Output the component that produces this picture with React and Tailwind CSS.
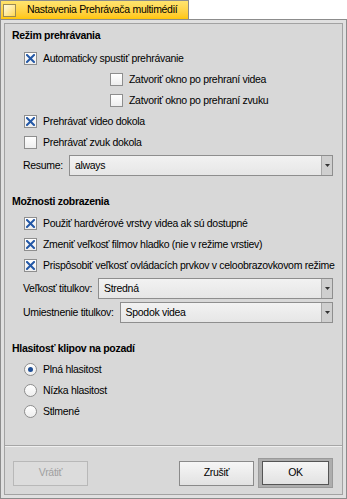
import React from 'react';

const Check = ({ checked }) => (
  <span className="flex h-[13px] w-[13px] shrink-0 items-center justify-center border border-[#8e8e8e] bg-linear-to-b from-[#ffffff] to-[#eeeeee]">
    {checked && (
      <svg width="9" height="9" viewBox="0 0 9 9">
        <path d="M1 1 L8 8 M8 1 L1 8" stroke="#2458a6" strokeWidth="2" strokeLinecap="square" />
      </svg>
    )}
  </span>
);

const Radio = ({ checked }) => (
  <span className="flex h-[13px] w-[13px] shrink-0 items-center justify-center rounded-full border border-[#8e8e8e] bg-linear-to-b from-[#ffffff] to-[#eeeeee]">
    {checked && <span className="h-[5px] w-[5px] rounded-full bg-[#1f4f96]" />}
  </span>
);

const CheckRow = ({ checked, indent = 'pl-[19px]', children }) => (
  <div className={`flex h-[21px] items-center ${indent}`}>
    <Check checked={checked} />
    <span className="ml-[6px] whitespace-nowrap">{children}</span>
  </div>
);

const RadioRow = ({ checked, children }) => (
  <div className="flex h-[21px] items-center pl-[19px]">
    <Radio checked={checked} />
    <span className="ml-[6px] whitespace-nowrap">{children}</span>
  </div>
);

const Select = ({ label, value, className = '' }) => (
  <div className={`flex h-[21px] items-center pl-[18px] pr-[9px] ${className}`}>
    <span className="mr-[6px] whitespace-nowrap">{label}</span>
    <div className="flex h-full flex-1 border border-[#8e8e8e] bg-linear-to-b from-[#f2f2f2] to-[#e6e6e6]">
      <span className="flex flex-1 items-center pl-[5px]">{value}</span>
      <span className="flex w-[11px] items-center justify-center border-l border-[#a8a8a8] bg-[#cfcfcf]">
        <svg width="5" height="3" viewBox="0 0 5 3">
          <path d="M0 0 H5 L2.5 3 Z" fill="#333" />
        </svg>
      </span>
    </div>
  </div>
);

const Heading = ({ children, className = '' }) => (
  <div className={`flex h-[16px] items-center pl-[7px] font-bold ${className}`}>{children}</div>
);

export default function App() {
  return (
    <div className="h-[499px] w-[347px] bg-white font-['Liberation_Sans',sans-serif] text-[10.5px] tracking-[-0.3px] text-black">
      <div className="flex h-[19px] w-[189px] items-center border-x border-t border-[#8c8c8c] bg-linear-to-b from-[#ffe46e] to-[#ffc600]">
        <span className="ml-[2px] h-[13px] w-[13px] shrink-0 border border-[#9a8a55] bg-linear-to-br from-[#fffbe0] to-[#ffd84a]" />
        <span className="ml-[11px] whitespace-nowrap">Nastavenia Prehrávača multimédií</span>
      </div>
      <div className="h-[480px] border border-[#8c8c8c] bg-[#e0e0e0] p-[3px]">
        <div className="flex h-full flex-col border border-[#a2a2a2] bg-[#d8d8d8] pt-[4px]">
          <Heading>Režim prehrávania</Heading>
          <div className="mt-[4px]">
            <CheckRow checked>Automaticky spustiť prehrávanie</CheckRow>
            <CheckRow indent="pl-[105px]">Zatvoriť okno po prehraní videa</CheckRow>
            <CheckRow indent="pl-[105px]">Zatvoriť okno po prehraní zvuku</CheckRow>
            <CheckRow checked>Prehrávať video dokola</CheckRow>
            <CheckRow>Prehrávať zvuk dokola</CheckRow>
          </div>
          <Select label="Resume:" value="always" className="mt-[2px]" />

          <Heading className="mt-[18px]">Možnosti zobrazenia</Heading>
          <div className="mt-[3px]">
            <CheckRow checked>Použiť hardvérové vrstvy videa ak sú dostupné</CheckRow>
            <CheckRow checked>Zmeniť veľkosť filmov hladko (nie v režime vrstiev)</CheckRow>
            <CheckRow checked>Prispôsobiť veľkosť ovládacích prvkov v celoobrazovkovom režime</CheckRow>
          </div>
          <Select label="Veľkosť titulkov:" value="Stredná" className="mt-[2px]" />
          <Select label="Umiestnenie titulkov:" value="Spodok videa" className="mt-[3px]" />

          <Heading className="mt-[18px]">Hlasitosť klipov na pozadí</Heading>
          <div className="mt-[2px]">
            <RadioRow checked>Plná hlasitost</RadioRow>
            <RadioRow>Nízka hlasitost</RadioRow>
            <RadioRow>Stlmené</RadioRow>
          </div>

          <div className="mt-[23px] border-t border-b border-t-[#a6a6a6] border-b-[#efefef]" />

          <div className="mt-[11px] flex items-center pl-[8px] pr-[9px]">
            <button className="flex h-[25px] w-[75px] items-center justify-center border border-[#b8b8b8] bg-[#dcdcdc] text-[#a0a0a0]">
              Vrátiť
            </button>
            <button className="ml-auto flex h-[25px] w-[75px] items-center justify-center border border-[#8a8a8a] bg-linear-to-b from-[#f6f6f6] to-[#e2e2e2]">
              Zrušiť
            </button>
            <div className="ml-[4px] border border-[#9a9a9a] bg-[#adadad] p-[2px] px-[3px]">
              <button className="flex h-[24px] w-[67px] items-center justify-center border border-[#555555] bg-linear-to-b from-[#f6f6f6] to-[#e2e2e2]">
                OK
              </button>
            </div>
          </div>
        </div>
      </div>
    </div>
  );
}
